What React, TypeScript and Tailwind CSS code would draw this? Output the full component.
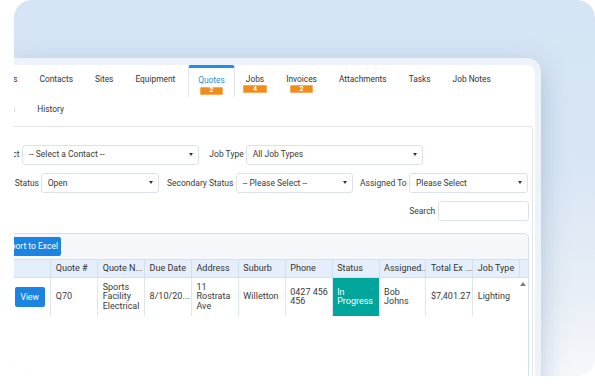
import React from "react";

function Arrow() {
  return (
    <svg width="4" height="3" viewBox="0 0 4 3" className="shrink-0">
      <polygon points="0,0 4,0 2,3" fill="#333" />
    </svg>
  );
}

function Select({ w, text }: { w: string; text: string }) {
  return (
    <div
      className={`${w} h-full shrink-0 border border-[#dde2e8] rounded-[3px] flex items-center justify-between pl-[6px] pr-[5px] text-[8.5px] text-[#3a3a3a] whitespace-nowrap bg-white`}
    >
      <span>{text}</span>
      <Arrow />
    </div>
  );
}

function Label({ w, pr, text }: { w: string; pr: string; text: string }) {
  return (
    <div
      className={`${w} ${pr} h-full shrink-0 flex items-center justify-end overflow-hidden whitespace-nowrap text-[8.5px] text-[#3a3a3a]`}
    >
      <span className="shrink-0">{text}</span>
    </div>
  );
}

function Badge({ n, mt }: { n: string; mt: string }) {
  return (
    <div className={`w-0 h-[8.5px] ${mt} self-center flex justify-center`}>
      <div className="shrink-0 w-[23.5px] h-[8.5px] bg-[#f28b1d] border border-[#f7ac5c] rounded-[1px] flex items-center justify-center text-white text-[7px] font-bold leading-none">
        {n}
      </div>
    </div>
  );
}

function Tab({ text, badge, pr = "pr-[11px]" }: { text: string; badge?: string; pr?: string }) {
  return (
    <div className={`pl-[11px] ${pr} pt-[8.5px] flex flex-col items-center shrink-0`}>
      <div className="text-[8.35px] leading-[10px] text-[#333] whitespace-nowrap">{text}</div>
      {badge && <Badge n={badge} mt="mt-[1.3px]" />}
    </div>
  );
}

const cols = [
  { h: "Quote #", d: ["Q70"] },
  { h: "Quote N...", d: ["Sports", "Facility", "Electrical"] },
  { h: "Due Date", d: ["8/10/20..."] },
  { h: "Address", d: ["11", "Rostrata", "Ave"] },
  { h: "Suburb", d: ["Willetton"] },
  { h: "Phone", d: ["0427 456", "456"] },
  { h: "Status", d: ["In", "Progress"], teal: true },
  { h: "Assigned...", d: ["Bob", "Johns"] },
  { h: "Total Ex ...", d: ["$7,401.27"] },
  { h: "Job Type", d: ["Lighting"] },
];

export default function App() {
  return (
    <div className="w-[595px] h-[391px] bg-white overflow-hidden font-['Roboto',sans-serif]">
      <div className="ml-[14px] w-[581px] h-[376px] rounded-[18px] overflow-hidden bg-[linear-gradient(180deg,#d5e5f5_0%,#d9e6f4_45%,#e9eff6_80%,#f6f8fb_100%)] pt-[58px]">
        <div className="w-[527px] h-[340px] bg-[#eef3f9] rounded-tr-[14px] pt-[7px] pr-[6px] shadow-[0_8px_28px_rgba(80,120,170,0.35)]">
          <div className="h-full bg-white rounded-tr-[8px] overflow-hidden flex flex-col">
            {/* Tabs row 1 */}
            <div className="h-[32px] flex items-start shrink-0">
              <div className="w-[14.5px] pr-[11px] pt-[8.5px] flex justify-end overflow-hidden shrink-0">
                <span className="shrink-0 text-[8.35px] leading-[10px] text-[#333] whitespace-nowrap">Details</span>
              </div>
              <Tab text="Contacts" />
              <Tab text="Sites" />
              <Tab text="Equipment" pr="pr-[13px]" />
              <div className="h-[32px] px-[9px] pt-[7px] border-x border-t-[3px] border-[#e2e6eb] border-t-[#1e8fe8] rounded-t-[3px] flex flex-col items-center shrink-0 bg-white">
                <div className="text-[8.35px] leading-[10px] text-[#1f8fe5] whitespace-nowrap">Quotes</div>
                <Badge n="2" mt="mt-[1.5px]" />
              </div>
              <Tab text="Jobs" badge="4" />
              <Tab text="Invoices" badge="2" />
              <Tab text="Attachments" />
              <Tab text="Tasks" />
              <Tab text="Job Notes" />
            </div>
            {/* Tabs row 2 */}
            <div className="h-[29px] flex items-start pt-[7.3px] shrink-0">
              <div className="w-[12.3px] pr-[11px] flex justify-end overflow-hidden shrink-0">
                <span className="shrink-0 text-[8.35px] leading-[10px] text-[#b4bcc8] whitespace-nowrap">Forms</span>
              </div>
              <div className="px-[11px] text-[8.35px] leading-[10px] text-[#333] whitespace-nowrap">History</div>
            </div>
            {/* Panel */}
            <div className="flex-1 mr-[2px] border-t border-r border-[#e1e5eb] rounded-tr-[4px] pt-[17.7px] flex flex-col">
              <div className="h-[20px] flex shrink-0">
                <Label w="w-[8px]" pr="pr-[2.5px]" text="Contact" />
                <Select w="w-[177.3px]" text="-- Select a Contact --" />
                <Label w="w-[46.4px]" pr="pr-[2px]" text="Job Type" />
                <Select w="w-[177.6px]" text="All Job Types" />
              </div>
              <div className="h-[20.6px] mt-[8px] flex shrink-0">
                <Label w="w-[26.7px]" pr="pr-[1.7px]" text="Status" />
                <Select w="w-[118.6px]" text="Open" />
                <Label w="w-[76.4px]" pr="pr-[2.4px]" text="Secondary Status" />
                <Select w="w-[117.6px]" text="-- Please Select --" />
                <Label w="w-[55.7px]" pr="pr-[2.3px]" text="Assigned To" />
                <Select w="w-[118.7px]" text="Please Select" />
              </div>
              <div className="h-[20px] mt-[7.7px] flex shrink-0">
                <Label w="w-[423.7px]" pr="pr-[2.4px]" text="Search" />
                <div className="w-[91px] h-full border border-[#dde2e8] rounded-[3px] bg-white" />
              </div>
              {/* Grid */}
              <div className="mt-[12px] w-[514.5px] flex-1 border-t border-r border-[#d2e1f0] rounded-tr-[5px] flex flex-col">
                <div className="h-[25px] bg-[#f5f7fa] pt-[2.7px] shrink-0 rounded-tr-[5px]">
                  <div className="w-[47px] h-[19.3px] bg-[#1b83e2] rounded-r-[2px] flex items-center justify-end pr-[3px] overflow-hidden">
                    <span className="shrink-0 whitespace-nowrap text-white text-[8.5px]">Export to Excel</span>
                  </div>
                </div>
                <div className="h-[19px] border-t border-b border-[#d2e1f0] bg-[#e4effb] flex shrink-0">
                  <div className="w-[36.3px] shrink-0" />
                  {cols.map((c) => (
                    <div
                      key={c.h}
                      className="w-[46.9px] shrink-0 border-l border-[#cfe0f1] pl-[4.5px] flex items-center text-[9px] text-[#333] whitespace-nowrap overflow-hidden"
                    >
                      {c.h}
                    </div>
                  ))}
                  <div className="flex-1 border-l border-[#cfe0f1]" />
                </div>
                <div className="h-[38px] flex shrink-0">
                  <div className="w-[36.3px] shrink-0 flex items-center pl-[1px]">
                    <div className="w-[29.5px] h-[19.5px] bg-[#1b83e2] rounded-[2px] flex items-center justify-center text-white text-[8.5px]">
                      View
                    </div>
                  </div>
                  {cols.map((c) => (
                    <div
                      key={c.h}
                      className={`w-[46.9px] shrink-0 border-l border-[#dbe7f3] pl-[4.5px] flex flex-col justify-center text-[9px] leading-[9.3px] whitespace-nowrap overflow-hidden ${
                        c.teal ? "bg-[#00a69c] text-white" : "text-[#3a3a3a]"
                      }`}
                    >
                      {c.d.map((l) => (
                        <div key={l}>{l}</div>
                      ))}
                    </div>
                  ))}
                  <div className="flex-1 flex justify-center pt-[4px]">
                    <svg width="6" height="4" viewBox="0 0 6 4">
                      <polygon points="0,4 6,4 3,0" fill="#7d7d7d" />
                    </svg>
                  </div>
                </div>
                <div className="flex-1" />
              </div>
            </div>
          </div>
        </div>
      </div>
    </div>
  );
}
